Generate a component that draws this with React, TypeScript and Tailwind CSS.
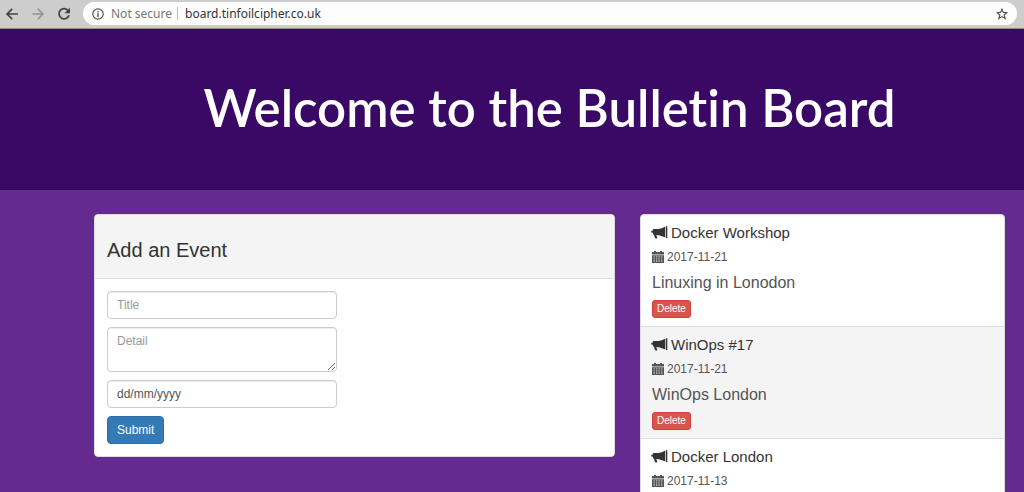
import React from "react";

type BoardEvent = { id: number; title: string; date: string; detail?: string };

const events: BoardEvent[] = [
  { id: 1, title: "Docker Workshop", date: "2017-11-21", detail: "Linuxing in Lonodon" },
  { id: 2, title: "WinOps #17", date: "2017-11-21", detail: "WinOps London" },
  { id: 3, title: "Docker London", date: "2017-11-13" },
];

function BullhornIcon() {
  return (
    <svg className="h-[14px] w-[17px] shrink-0" viewBox="0 0 17 14" fill="currentColor" aria-hidden="true">
      <path d="M15 0.300h1.300v11.700H15z" />
      <path d="M14.300 .6v10.800L9 9.500 5.300 9l1 2.800c.1.500-.1.700-.5.700H4.700c-.3 0-.6-.2-.7-.5L3 8.700c-.7-.1-1.100-.5-1.100-1.100V6.800L.3 6.400V4.800l1.600-.4V4c0-.6.4-1 1.100-1H8C10.300 2.700 12.700 1.800 14.300 .6z" />
    </svg>
  );
}

function CalendarIcon() {
  return (
    <svg className="h-3 w-3 shrink-0" viewBox="0 0 12 12" aria-hidden="true">
      <path
        fill="currentColor"
        fillRule="evenodd"
        d="M2 0h2v1h4V0h2v1h2v2.600H0V1h2zM0 4.200h12V12H0zM1.500 5.400v.8h1.300v-.8zm2.500 0v.8h1.300v-.8zm2.500 0v.8h1.300v-.8zm2.500 0v.8h1.300v-.8zM1.500 7.500v.8h1.300v-.8zm2.500 0v.8h1.300v-.8zm2.500 0v.8h1.300v-.8zm2.500 0v.8h1.300v-.8zM1.500 9.600v.8h1.300v-.8zm2.500 0v.8h1.300v-.8zm2.500 0v.8h1.300v-.8zm2.500 0v.8h1.300v-.8z"
      />
    </svg>
  );
}

function BrowserBar() {
  return (
    <header className="flex h-[29px] shrink-0 items-start border-b border-[#8f8f8f] bg-[#cdcdcd] pt-[2px] pr-[7px] pl-[5px] font-['Noto_Sans',sans-serif] text-xs">
      <div className="flex h-[23px] items-center">
        <button type="button" aria-label="Back" className="mr-3 text-[#444]">
          <svg className="size-[14px]" viewBox="0 0 14 14" fill="none" stroke="currentColor" strokeWidth="1.7">
            <path d="M13 7H2.200M7.200 1.800 2 7l5.200 5.200" />
          </svg>
        </button>
        <button type="button" aria-label="Forward" className="mr-3 text-[#929292]">
          <svg className="size-[14px]" viewBox="0 0 14 14" fill="none" stroke="currentColor" strokeWidth="1.600">
            <path d="M1.500 7h10.300M6.800 1.800 12 7l-5.200 5.200" />
          </svg>
        </button>
        <button type="button" aria-label="Reload" className="mr-3 text-[#444]">
          <svg className="size-[14px]" viewBox="0 0 14 14">
            <path d="M11.200 3.700A5.100 5.100 0 1 0 12 8.300" fill="none" stroke="currentColor" strokeWidth="1.800" />
            <path d="M13 .8v5.400H7.600z" fill="currentColor" />
          </svg>
        </button>
      </div>
      <div className="flex h-[23px] flex-1 items-center rounded-full bg-[#fdfdfd] pr-[9px] pl-[9px]">
        <svg className="mr-[7px] size-3 shrink-0 text-[#555]" viewBox="0 0 12 12" aria-hidden="true">
          <circle cx="6" cy="6" r="5.200" fill="none" stroke="currentColor" strokeWidth="1.200" />
          <path d="M5.300 5.200h1.400v3.700H5.300zM5.300 3h1.400v1.400H5.300z" fill="currentColor" />
        </svg>
        <span className="text-[#777]">Not secure</span>
        <span className="mr-[7px] ml-[5px] h-[13px] w-px bg-[#bbb]" />
        <span className="flex-1 text-[#333]">board.tinfoilcipher.co.uk</span>
        <button type="button" aria-label="Bookmark this page" className="text-[#555]">
          <svg className="size-3" viewBox="0 0 12 12" fill="none" stroke="currentColor" strokeWidth="1.200">
            <path d="M6 1.200l1.400 3.200 3.500.3-2.700 2.300.9 3.500L6 8.600l-3.100 1.900.9-3.500L1.100 4.700l3.500-.3z" />
          </svg>
        </button>
      </div>
    </header>
  );
}

const fieldClass =
  "block w-full rounded border border-[#ccc] bg-white px-[9px] text-xs text-[#555] shadow-[inset_0_1px_1px_rgba(0,0,0,0.075)] outline-none";

function EventForm() {
  return (
    <section className="overflow-hidden rounded border border-[#ddd] bg-white">
      <div className="border-b border-[#ddd] bg-[#f4f4f4] px-3 pt-6 pb-4">
        <h2 className="text-[20px] leading-[23px]">Add an Event</h2>
      </div>
      <form className="flex flex-col items-start gap-2 p-3" onSubmit={(e) => e.preventDefault()}>
        <div className="flex w-full max-w-[230px] flex-col gap-2">
          <input aria-label="Title" placeholder="Title" className={`${fieldClass} h-7 placeholder:text-[#999]`} />
          <textarea
            aria-label="Detail"
            placeholder="Detail"
            className={`${fieldClass} h-[45px] resize-y py-[5px] leading-4 placeholder:text-[#999]`}
          />
          <input
            aria-label="Date"
            placeholder="dd/mm/yyyy"
            className={`${fieldClass} h-7 placeholder:text-[#555]`}
          />
        </div>
        <button type="submit" className="h-7 rounded border border-[#2e6da4] bg-[#337ab7] px-[9px] text-xs text-white">
          Submit
        </button>
      </form>
    </section>
  );
}

function EventList() {
  return (
    <ul className="overflow-hidden rounded border border-[#ddd] bg-white">
      {events.map((event) => (
        <li key={event.id} className="border-b border-[#ddd] px-[11px] pt-2 pb-2 last:border-b-0 even:bg-[#f4f4f4]">
          <h3 className="-ml-px flex items-center gap-[3px] text-[15px] leading-5">
            <BullhornIcon />
            {event.title}
          </h3>
          <p className="mt-1 flex items-center gap-[3px] text-xs leading-5 text-[#555]">
            <CalendarIcon />
            {event.date}
          </p>
          <p className="mt-1 min-h-6 text-[16px] leading-6 text-[#555]">{event.detail}</p>
          <button
            type="button"
            className="mt-[5px] block h-[18px] rounded-[3px] border border-[#d43f3a] bg-[#d9534f] px-1 text-[10px] leading-4 text-white"
          >
            Delete
          </button>
        </li>
      ))}
    </ul>
  );
}

export default function App() {
  return (
    <div className="flex h-screen flex-col overflow-hidden bg-[#642a90] font-['Liberation_Sans',Arial,sans-serif] text-[#333]">
      <BrowserBar />
      <div className="shrink-0 bg-[#3a0965] pt-[46px] pr-[19px] pb-[50px] pl-[94px]">
        <h1 className="text-center font-['Lato',sans-serif] text-[51px] leading-[65px] font-semibold whitespace-nowrap text-white [font-variant-ligatures:none]">
          Welcome to the Bulletin Board
        </h1>
      </div>
      <main className="grid grid-cols-[521fr_365fr] items-start gap-[25px] pt-6 pr-[19px] pl-[94px]">
        <EventForm />
        <EventList />
      </main>
    </div>
  );
}
